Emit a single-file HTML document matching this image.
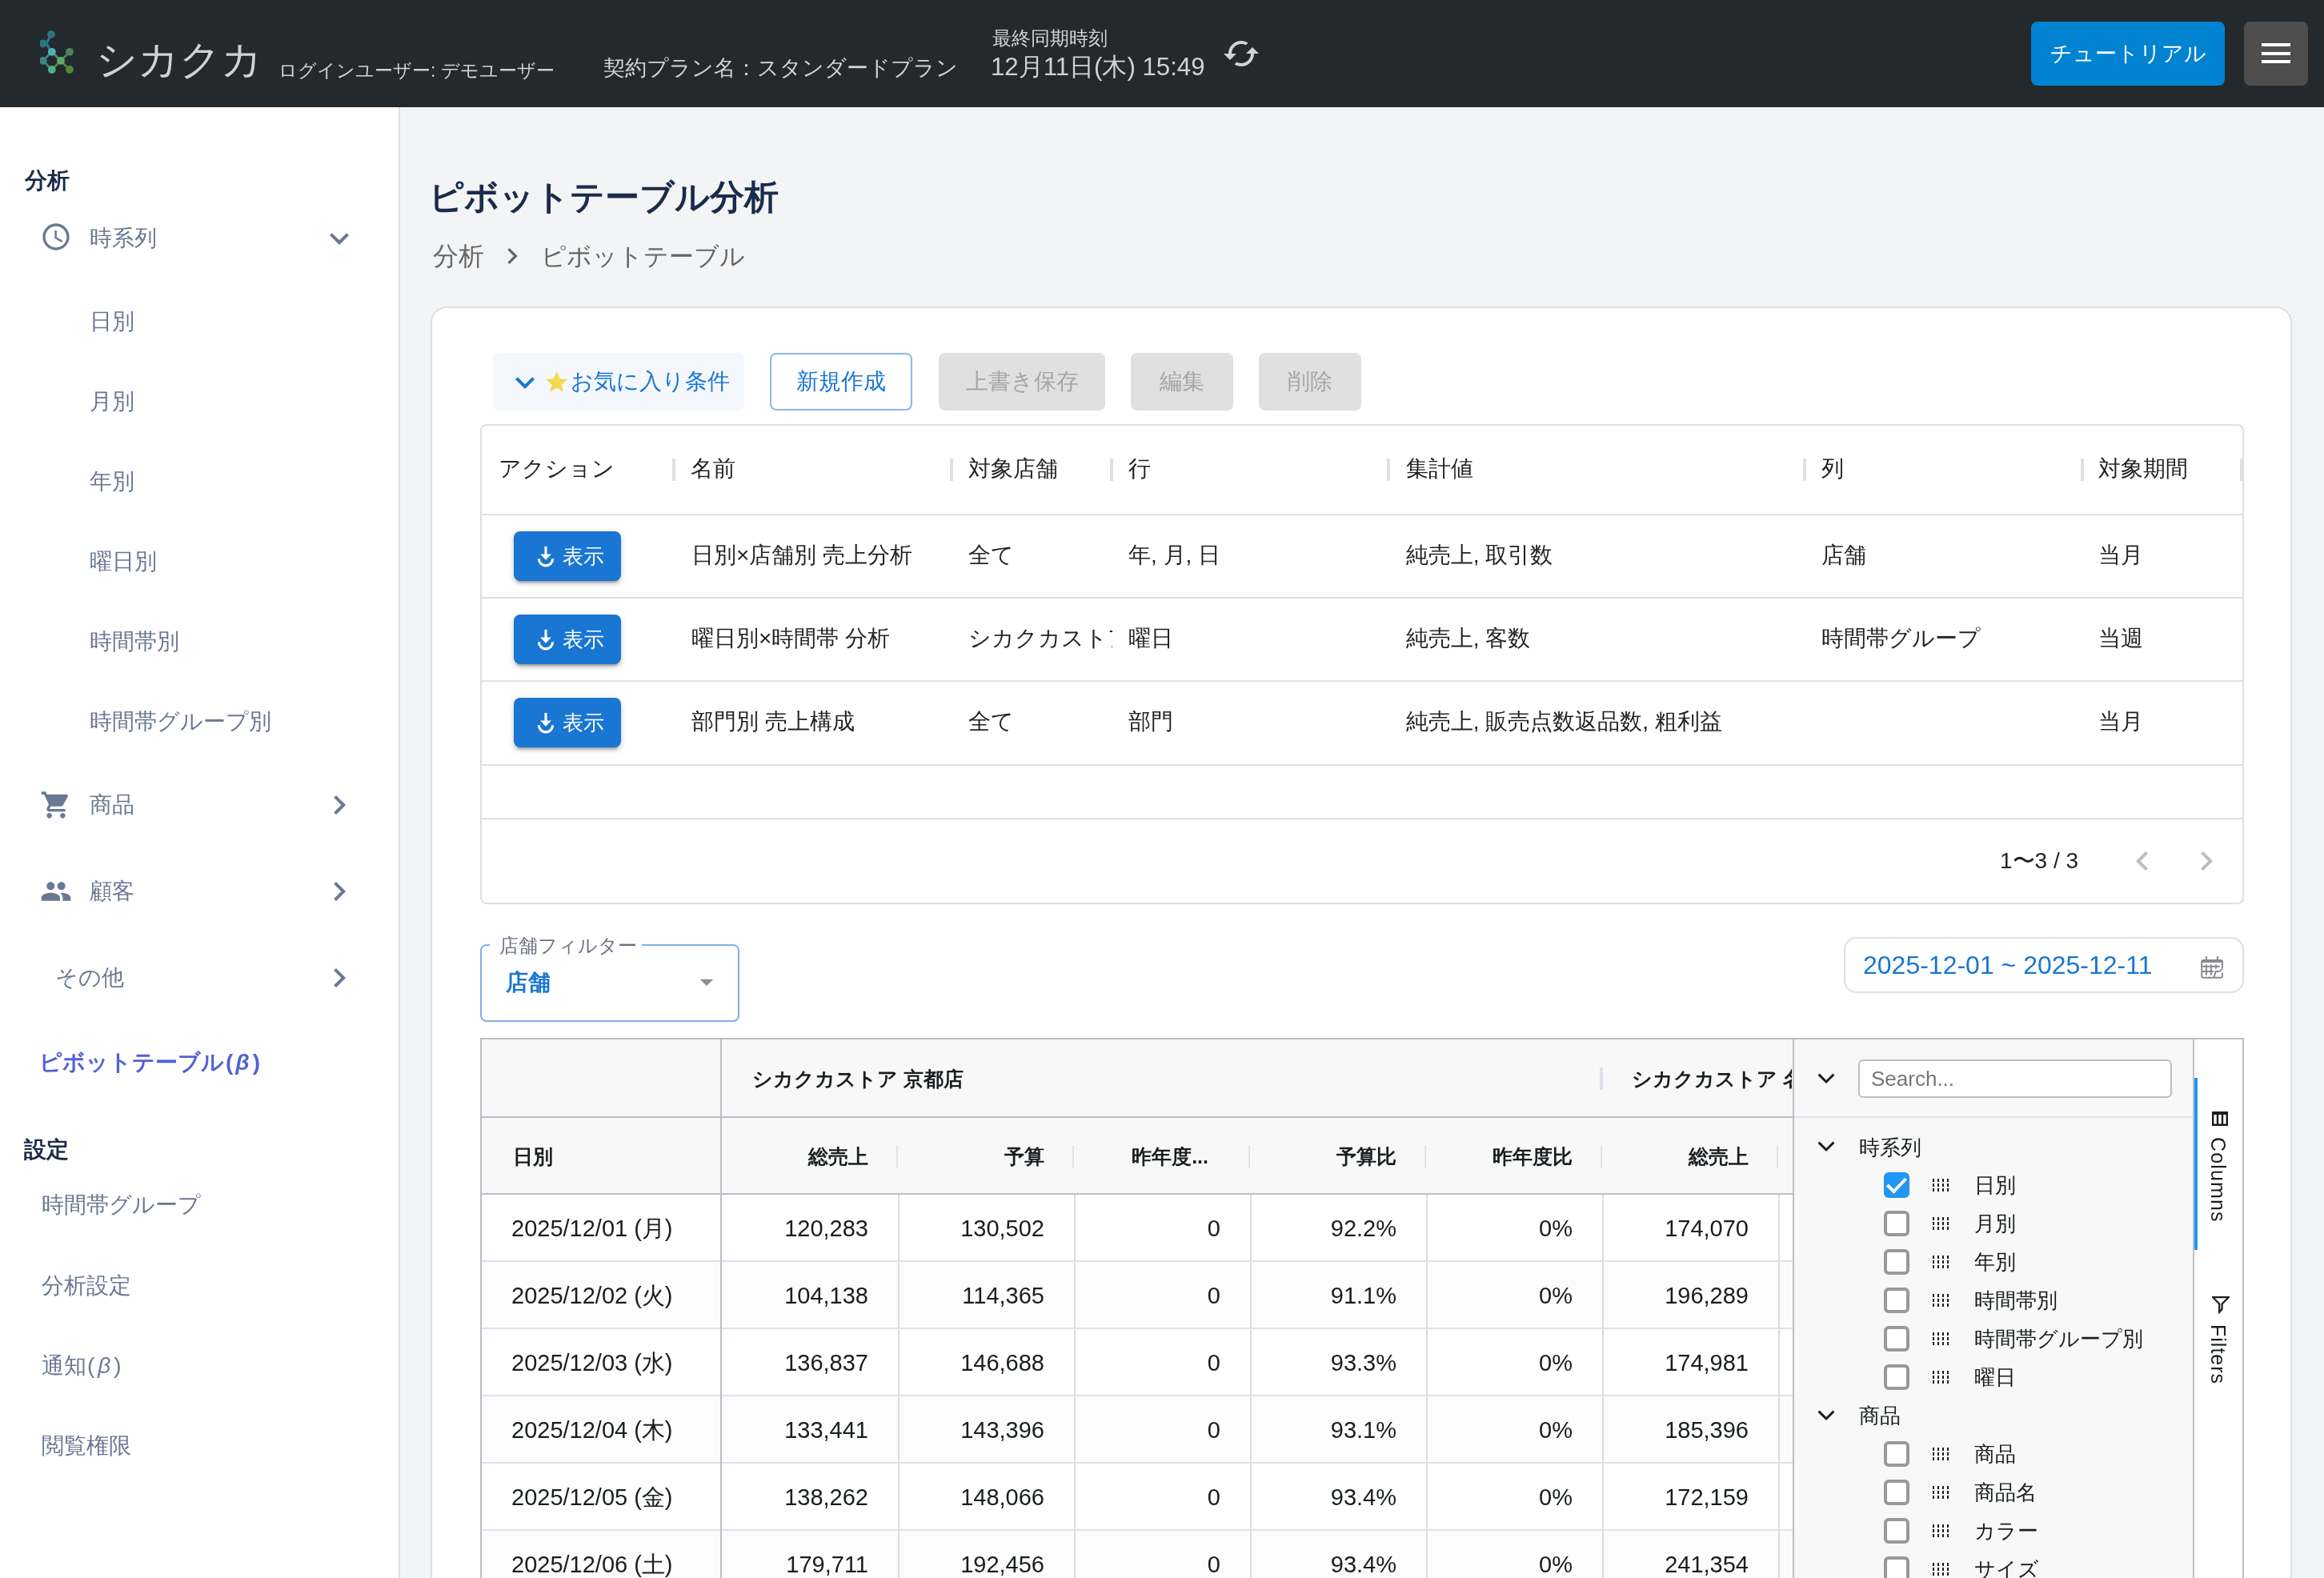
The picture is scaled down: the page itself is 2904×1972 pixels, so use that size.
<!DOCTYPE html>
<html><head><meta charset="utf-8">
<style>
html,body{margin:0;padding:0;background:#f3f4f6;overflow:hidden;}
body{width:2904px;height:1972px;}
#root{zoom:2;will-change:transform;position:relative;width:1452px;height:986px;overflow:hidden;background:#f3f4f6;font-family:"Liberation Sans",sans-serif;color:rgba(0,0,0,0.87);}
.a{position:absolute;white-space:nowrap;}
svg{display:block;}
/* header */
#hdr{position:absolute;left:0;top:0;width:1452px;height:67px;background:#24292d;}
/* sidebar */
#side{position:absolute;left:0;top:67px;width:249px;height:919px;background:#fff;border-right:1px solid #dedede;}
.sec{font-size:14px;font-weight:bold;color:#1b2b4b;line-height:20px;height:20px;}
.mi{font-size:14px;color:#6b7893;line-height:20px;height:20px;}

.t14{font-size:14px;line-height:20px;height:20px;}
.btn{position:absolute;top:220.5px;height:36px;border-radius:4px;font-size:14px;line-height:36px;text-align:center;}
.dis{background:#e0e0e0;color:#a6a6a6;}
.hl{position:absolute;height:1px;background:#e0e0e0;}
.sep{position:absolute;top:286.5px;width:2px;height:14px;background:#e0e0e0;}
.show{position:absolute;left:321px;width:67px;height:31px;background:#1976d2;border-radius:4px;box-shadow:0 3px 1px -2px rgba(0,0,0,0.2),0 2px 2px 0 rgba(0,0,0,0.14),0 1px 5px 0 rgba(0,0,0,0.12);}
.show span{position:absolute;left:30.5px;top:5.5px;font-size:13px;line-height:20px;color:#fff;}
.show svg{position:absolute;left:14px;top:8px;}
.cell{position:absolute;font-size:14px;line-height:20px;height:20px;white-space:nowrap;color:rgba(0,0,0,0.87);}
.ph{position:absolute;font-size:12.5px;line-height:18px;font-weight:bold;color:#181d1f;white-space:nowrap;}
.pc{position:absolute;font-size:14.5px;line-height:20px;color:#181d1f;white-space:nowrap;}
.pr{text-align:right;width:100px;}
.vl{position:absolute;width:1px;background:#dddddd;}
.cb{position:absolute;left:1177px;width:12px;height:12px;border:2px solid #999;border-radius:3px;background:#fff;}
.grip{position:absolute;left:1207.5px;width:11px;height:8px;}
.lbl{position:absolute;left:1233.5px;font-size:13px;line-height:18px;color:#181d1f;white-space:nowrap;}
@media (max-width:1500px){body{width:1452px;height:986px;}#root{zoom:1;}}
</style></head>
<body><div id="root">

<!-- HEADER -->
<div id="hdr">
  <svg class="a" style="left:25px;top:18px" width="24" height="30" viewBox="0 0 24 30">
    <path d="M6.97 3.43 C5.2 5.5 5.5 8.6 3.2 9.0 M3.2 9.0 C5.5 10 5.6 13 7.4 14.4" stroke="#2d7888" stroke-width="1.6" fill="none"/>
    <path d="M7.4 14.4 L1.88 19.95 L7.4 25.5" stroke="#3f8580" stroke-width="1.4" fill="none"/>
    <path d="M7.4 14.4 L12.95 19.95" stroke="#4a8a6a" stroke-width="1.4" fill="none"/>
    <path d="M7.4 25.5 L12.95 19.95 L18.5 25.5" stroke="#4f8a3f" stroke-width="1.4" fill="none"/>
    <path d="M12.95 19.95 L18.5 14.4" stroke="#4a8565" stroke-width="1.4" fill="none"/>
    <circle cx="6.97" cy="3.43" r="2.45" fill="#2d7283"/>
    <ellipse cx="1.9" cy="9.2" rx="2.6" ry="2.45" fill="#2c7384"/>
    <circle cx="7.4" cy="14.4" r="2.45" fill="#4db5b0"/>
    <circle cx="18.5" cy="14.4" r="2.45" fill="#4a8565"/>
    <circle cx="1.88" cy="19.95" r="2.45" fill="#3f8580"/>
    <circle cx="12.95" cy="19.95" r="2.45" fill="#5aab6d"/>
    <circle cx="7.4" cy="25.5" r="2.45" fill="#53ad8a"/>
    <circle cx="18.5" cy="25.5" r="2.45" fill="#4f873d"/>
  </svg>
  <div class="a" style="left:60px;top:22.5px;font-size:25.5px;line-height:30px;color:#d2d2d2;">シカクカ</div>
  <div class="a" style="left:174px;top:36px;font-size:11.5px;line-height:16px;color:#d2d2d2;">ログインユーザー: デモユーザー</div>
  <div class="a" style="left:377px;top:33.5px;font-size:13.6px;line-height:18px;color:#d2d2d2;">契約プラン名：スタンダードプラン</div>
  <div class="a" style="left:620px;top:16px;font-size:12px;line-height:16px;color:#d2d2d2;">最終同期時刻</div>
  <div class="a" style="left:619px;top:33px;font-size:15.6px;line-height:18px;color:#d2d2d2;">12月11日(木) 15:49</div>
  <svg class="a" style="left:763.5px;top:21.4px" width="24" height="24" viewBox="0 0 24 24"><path fill="#d2d2d2" d="M19 8l-4 4h3c0 3.31-2.69 6-6 6-1.01 0-1.97-.25-2.8-.7l-1.46 1.46C8.97 19.54 10.43 20 12 20c4.42 0 8-3.58 8-8h3l-4-4zM6 12c0-3.31 2.69-6 6-6 1.01 0 1.97.25 2.8.7l1.46-1.46C15.03 4.46 13.57 4 12 4c-4.42 0-8 3.58-8 8H1l4 4 4-4H6z"/></svg>
  <div class="a" style="left:1269px;top:13.5px;width:121px;height:40px;background:#0283d1;border-radius:4px;color:#fff;font-size:13.4px;line-height:40px;text-align:center;">チュートリアル</div>
  <div class="a" style="left:1402px;top:13.5px;width:40px;height:40px;background:#4e4e4e;border-radius:4px;">
    <div class="a" style="left:11px;top:13.5px;width:18px;height:2px;background:#fff"></div>
    <div class="a" style="left:11px;top:19px;width:18px;height:2px;background:#fff"></div>
    <div class="a" style="left:11px;top:24px;width:18px;height:2px;background:#fff"></div>
  </div>
</div>

<!-- SIDEBAR -->
<div id="side">
  <div class="a sec" style="left:15.5px;top:35.75px;">分析</div>
  <svg class="a" style="left:25px;top:71px" width="20" height="20" viewBox="0 0 24 24"><path fill="#6b7893" d="M11.99 2C6.47 2 2 6.48 2 12s4.47 10 9.99 10C17.52 22 22 17.52 22 12S17.52 2 11.99 2zM12 20c-4.42 0-8-3.58-8-8s3.58-8 8-8 8 3.58 8 8-3.58 8-8 8zm.5-13H11v6l5.25 3.15.75-1.23-4.5-2.67z"/></svg>
  <div class="a mi" style="left:56px;top:72px;">時系列</div>
  <svg class="a" style="left:200px;top:70px" width="24" height="24" viewBox="0 0 24 24"><path fill="#6b7893" d="M16.59 8.59 12 13.17 7.41 8.59 6 10l6 6 6-6z"/></svg>
  <div class="a mi" style="left:56px;top:124px;">日別</div>
  <div class="a mi" style="left:56px;top:174px;">月別</div>
  <div class="a mi" style="left:56px;top:224px;">年別</div>
  <div class="a mi" style="left:56px;top:274px;">曜日別</div>
  <div class="a mi" style="left:56px;top:324px;">時間帯別</div>
  <div class="a mi" style="left:56px;top:374px;">時間帯グループ別</div>
  <svg class="a" style="left:25px;top:426px" width="20" height="20" viewBox="0 0 24 24"><path fill="#6b7893" d="M7 18c-1.1 0-1.99.9-1.99 2S5.9 22 7 22s2-.9 2-2-.9-2-2-2zM1 2v2h2l3.6 7.59-1.35 2.45c-.16.28-.25.61-.25.96 0 1.1.9 2 2 2h12v-2H7.42c-.14 0-.25-.11-.25-.25l.03-.12.9-1.63h7.45c.75 0 1.41-.41 1.75-1.03l3.58-6.47c.08-.15.12-.31.12-.48 0-.55-.45-1-1-1H5.21l-.94-2H1zm16 16c-1.1 0-1.99.9-1.99 2s.89 2 1.99 2 2-.9 2-2-.9-2-2-2z"/></svg>
  <div class="a mi" style="left:56px;top:426px;">商品</div>
  <svg class="a" style="left:200px;top:424px" width="24" height="24" viewBox="0 0 24 24"><path fill="#6b7893" d="M10 6 8.59 7.41 13.17 12l-4.58 4.59L10 18l6-6z"/></svg>
  <svg class="a" style="left:25.2px;top:479.8px" width="20" height="20" viewBox="0 0 24 24"><path fill="#6b7893" d="M16 11c1.66 0 2.99-1.34 2.99-3S17.66 5 16 5c-1.66 0-3 1.34-3 3s1.34 3 3 3zm-8 0c1.66 0 2.99-1.34 2.99-3S9.66 5 8 5C6.34 5 5 6.34 5 8s1.34 3 3 3zm0 2c-2.33 0-7 1.17-7 3.5V19h14v-2.5c0-2.33-4.67-3.5-7-3.5zm8 0c-.29 0-.62.02-.97.05 1.16.84 1.97 1.97 1.97 3.45V19h6v-2.5c0-2.33-4.67-3.5-7-3.5z"/></svg>
  <div class="a mi" style="left:56px;top:480px;">顧客</div>
  <svg class="a" style="left:200px;top:478px" width="24" height="24" viewBox="0 0 24 24"><path fill="#6b7893" d="M10 6 8.59 7.41 13.17 12l-4.58 4.59L10 18l6-6z"/></svg>
  <div class="a mi" style="left:34.5px;top:534px;">その他</div>
  <svg class="a" style="left:200px;top:532px" width="24" height="24" viewBox="0 0 24 24"><path fill="#6b7893" d="M10 6 8.59 7.41 13.17 12l-4.58 4.59L10 18l6-6z"/></svg>
  <div class="a mi" style="left:24.5px;top:587px;color:#5262d4;font-weight:bold;">ピボットテーブル<span style="margin-left:1px">(</span><span style="font-style:italic;margin:0 2px 0 1.5px">β</span><span>)</span></div>
  <div class="a sec" style="left:15px;top:641.5px;">設定</div>
  <div class="a mi" style="left:26px;top:676px;">時間帯グループ</div>
  <div class="a mi" style="left:26px;top:726.5px;">分析設定</div>
  <div class="a mi" style="left:26px;top:776.5px;">通知<span style="margin-left:0.5px">(</span><span style="font-style:italic;margin:0 2px 0 2px">β</span><span>)</span></div>
  <div class="a mi" style="left:26px;top:826.5px;">閲覧権限</div>
</div>

<!-- MAIN -->
<div class="a" style="left:268px;top:108px;font-size:21.7px;line-height:30px;font-weight:bold;color:#1a2b4c;">ピボットテーブル分析</div>
<div class="a" style="left:270.5px;top:149px;font-size:16px;line-height:22px;color:#666;">分析</div>
<svg class="a" style="left:309.8px;top:150px" width="20" height="20" viewBox="0 0 24 24"><path fill="#666" d="M10 6 8.59 7.41 13.17 12l-4.58 4.59L10 18l6-6z"/></svg>
<div class="a" style="left:338px;top:149.5px;font-size:15.4px;line-height:22px;color:#666;">ピボットテーブル</div>

<div class="a" style="left:269px;top:191.5px;width:1161px;height:900px;background:#fff;border:1px solid #dcdee2;border-radius:10px;"></div>

<div class="btn" style="left:308px;width:157px;background:#f4f8fc;"></div>
<svg class="a" style="left:316.1px;top:227px" width="24" height="24" viewBox="0 0 24 24"><path fill="#1976d2" d="M16.59 8.59 12 13.17 7.41 8.59 6 10l6 6 6-6z"/></svg>
<svg class="a" style="left:340.5px;top:232px" width="14.6" height="14" viewBox="0 0 24 23"><path fill="#f2d94e" d="M12 0l3.1 7.6 8.1.6-6.2 5.3 2 7.9L12 17.1l-7 4.3 2-7.9L.8 8.2l8.1-.6z"/></svg>
<div class="a" style="left:356.5px;top:228.5px;font-size:14px;line-height:20px;color:#1976d2;">お気に入り条件</div>
<div class="btn" style="left:481px;width:87px;border:1px solid #8ab9e9;color:#1976d2;height:34px;line-height:34px;">新規作成</div>
<div class="btn dis" style="left:586.5px;width:104px;">上書き保存</div>
<div class="btn dis" style="left:706.5px;width:64px;">編集</div>
<div class="btn dis" style="left:786.5px;width:64px;">削除</div>

<!-- saved conditions grid -->
<div class="a" style="left:300px;top:265px;width:1100px;height:298px;border:1px solid #e0e0e0;border-radius:4px;background:#fff;"></div>
<div class="hl" style="left:301px;top:321px;width:1100px;"></div>
<div class="hl" style="left:301px;top:373px;width:1100px;"></div>
<div class="hl" style="left:301px;top:425px;width:1100px;"></div>
<div class="hl" style="left:301px;top:477.5px;width:1100px;"></div>
<div class="hl" style="left:301px;top:511px;width:1100px;"></div>
<div class="sep" style="left:420px"></div>
<div class="sep" style="left:593.5px"></div>
<div class="sep" style="left:693.5px"></div>
<div class="sep" style="left:866.5px"></div>
<div class="sep" style="left:1126.5px"></div>
<div class="sep" style="left:1300px"></div>
<div class="sep" style="left:1399.5px"></div>
<div class="cell" style="left:311.5px;top:283px;">アクション</div>
<div class="cell" style="left:431.5px;top:283px;">名前</div>
<div class="cell" style="left:605px;top:283px;">対象店舗</div>
<div class="cell" style="left:705px;top:283px;">行</div>
<div class="cell" style="left:878.4px;top:283px;">集計値</div>
<div class="cell" style="left:1138px;top:283px;">列</div>
<div class="cell" style="left:1311px;top:283px;">対象期間</div>

<div class="show" style="top:332px;"><svg width="12" height="15" viewBox="0 0 12 15"><path d="M6 1.45v5.5" stroke="#fff" stroke-width="1.55"/><path d="M2.55 6.25h6.9L6 9.9z" fill="#fff"/><path d="M1.67 9.1a4.33 4.33 0 0 0 8.66 0" stroke="#fff" stroke-width="1.55" fill="none"/></svg><span>表示</span></div>
<div class="show" style="top:384px;"><svg width="12" height="15" viewBox="0 0 12 15"><path d="M6 1.45v5.5" stroke="#fff" stroke-width="1.55"/><path d="M2.55 6.25h6.9L6 9.9z" fill="#fff"/><path d="M1.67 9.1a4.33 4.33 0 0 0 8.66 0" stroke="#fff" stroke-width="1.55" fill="none"/></svg><span>表示</span></div>
<div class="show" style="top:436px;"><svg width="12" height="15" viewBox="0 0 12 15"><path d="M6 1.45v5.5" stroke="#fff" stroke-width="1.55"/><path d="M2.55 6.25h6.9L6 9.9z" fill="#fff"/><path d="M1.67 9.1a4.33 4.33 0 0 0 8.66 0" stroke="#fff" stroke-width="1.55" fill="none"/></svg><span>表示</span></div>

<div class="cell" style="left:432px;top:337px;">日別×店舗別 売上分析</div>
<div class="cell" style="left:605px;top:337px;">全て</div>
<div class="cell" style="left:705px;top:337px;">年, 月, 日</div>
<div class="cell" style="left:878.4px;top:337px;">純売上, 取引数</div>
<div class="cell" style="left:1138px;top:337px;">店舗</div>
<div class="cell" style="left:1311px;top:337px;">当月</div>

<div class="cell" style="left:432px;top:389px;">曜日別×時間帯 分析</div>
<div class="cell" style="left:605px;top:389px;width:90px;overflow:hidden;">シカクカストア</div>
<div class="cell" style="left:705px;top:389px;">曜日</div>
<div class="cell" style="left:878.4px;top:389px;">純売上, 客数</div>
<div class="cell" style="left:1138px;top:389px;">時間帯グループ</div>
<div class="cell" style="left:1311px;top:389px;">当週</div>

<div class="cell" style="left:432px;top:441px;">部門別 売上構成</div>
<div class="cell" style="left:605px;top:441px;">全て</div>
<div class="cell" style="left:705px;top:441px;">部門</div>
<div class="cell" style="left:878.4px;top:441px;">純売上, 販売点数返品数, 粗利益</div>
<div class="cell" style="left:1311px;top:441px;">当月</div>

<div class="cell" style="left:1249.5px;top:528px;">1〜3 / 3</div>
<svg class="a" style="left:1326.7px;top:525.8px" width="24" height="24" viewBox="0 0 24 24"><path fill="#bdbdbd" d="M15.41 16.59 10.83 12l4.58-4.59L14 6l-6 6 6 6 1.41-1.41z"/></svg>
<svg class="a" style="left:1366.4px;top:525.8px" width="24" height="24" viewBox="0 0 24 24"><path fill="#bdbdbd" d="M8.59 16.59 13.17 12 8.59 7.41 10 6l6 6-6 6-1.41-1.41z"/></svg>

<!-- store filter -->
<div class="a" style="left:300px;top:590px;width:160px;height:46.5px;border:1px solid #7eb0e9;border-radius:4px;"></div>
<div class="a" style="left:306px;top:588px;width:95px;height:4px;background:#fff;"></div>
<div class="a" style="left:312px;top:583px;font-size:12px;line-height:16px;color:#6b7280;">店舗フィルター</div>
<div class="a" style="left:316px;top:604px;font-size:14px;line-height:20px;font-weight:bold;color:#1976d2;">店舗</div>
<svg class="a" style="left:431.6px;top:603.4px" width="20" height="20" viewBox="0 0 24 24"><path fill="#8e8e8e" d="M7 10l5 5 5-5z"/></svg>

<!-- date picker -->
<div class="a" style="left:1152px;top:585.5px;width:248px;height:33px;border:1px solid #dcdfe6;border-radius:8px;background:#fff;"></div>
<div class="a" style="left:1164px;top:592px;font-size:16px;line-height:22px;color:#1976d2;">2025-12-01 ~ 2025-12-11</div>
<svg class="a" style="left:1370px;top:592.5px" width="25" height="22.5" viewBox="0 0 50 45"><g fill="none" stroke="#88888e" stroke-width="1.9"><path d="M37 30.4V34.7Q37 36.7 35 36.7H13.2Q11.2 36.7 11.2 34.7V17Q11.2 15 13.2 15H35Q37 15 37 17V23.5C37 27 34 28.95 30.8 28.95H28.5C28 32 27.5 35 26 36.7"/><path d="M16.95 10V15M30.95 10V15M11.8 22.8H33.8M11.8 28.95H25.8M16.95 20.25V33.8M22.95 20.25V33.8M28.95 20.25V25.7"/></g><rect x="11.2" y="15" width="25.8" height="2.9" fill="#88888e"/></svg>

<!-- PIVOT -->
<div class="a" style="left:0;top:0.5px;width:1452px;height:986px;">
<div class="a" style="left:300px;top:648px;width:1100px;height:400px;border:1px solid #babfc7;background:#fff;"></div>
<div class="a" style="left:301px;top:649px;width:820px;height:97px;background:#f8f8f8;"></div>
<div class="a" style="left:301px;top:697px;width:820px;height:1px;background:#babfc7;"></div>
<div class="a" style="left:301px;top:745px;width:820px;height:1px;background:#babfc7;"></div>
<div class="a" style="left:301px;top:746px;width:820px;height:41px;background:#fff;"></div>
<div class="a" style="left:301px;top:787px;width:820px;height:1px;background:#dde2eb;"></div>
<div class="pc" style="left:319.5px;top:757px;">2025/12/01 (月)</div>
<div class="pc pr" style="left:442.5px;top:757px;">120,283</div>
<div class="pc pr" style="left:552.5px;top:757px;">130,502</div>
<div class="pc pr" style="left:662.5px;top:757px;">0</div>
<div class="pc pr" style="left:772.5px;top:757px;">92.2%</div>
<div class="pc pr" style="left:882.5px;top:757px;">0%</div>
<div class="pc pr" style="left:992.5px;top:757px;">174,070</div>
<div class="a" style="left:301px;top:788px;width:820px;height:41px;background:#fcfcfc;"></div>
<div class="a" style="left:301px;top:829px;width:820px;height:1px;background:#dde2eb;"></div>
<div class="pc" style="left:319.5px;top:799px;">2025/12/02 (火)</div>
<div class="pc pr" style="left:442.5px;top:799px;">104,138</div>
<div class="pc pr" style="left:552.5px;top:799px;">114,365</div>
<div class="pc pr" style="left:662.5px;top:799px;">0</div>
<div class="pc pr" style="left:772.5px;top:799px;">91.1%</div>
<div class="pc pr" style="left:882.5px;top:799px;">0%</div>
<div class="pc pr" style="left:992.5px;top:799px;">196,289</div>
<div class="a" style="left:301px;top:830px;width:820px;height:41px;background:#fff;"></div>
<div class="a" style="left:301px;top:871px;width:820px;height:1px;background:#dde2eb;"></div>
<div class="pc" style="left:319.5px;top:841px;">2025/12/03 (水)</div>
<div class="pc pr" style="left:442.5px;top:841px;">136,837</div>
<div class="pc pr" style="left:552.5px;top:841px;">146,688</div>
<div class="pc pr" style="left:662.5px;top:841px;">0</div>
<div class="pc pr" style="left:772.5px;top:841px;">93.3%</div>
<div class="pc pr" style="left:882.5px;top:841px;">0%</div>
<div class="pc pr" style="left:992.5px;top:841px;">174,981</div>
<div class="a" style="left:301px;top:872px;width:820px;height:41px;background:#fcfcfc;"></div>
<div class="a" style="left:301px;top:913px;width:820px;height:1px;background:#dde2eb;"></div>
<div class="pc" style="left:319.5px;top:883px;">2025/12/04 (木)</div>
<div class="pc pr" style="left:442.5px;top:883px;">133,441</div>
<div class="pc pr" style="left:552.5px;top:883px;">143,396</div>
<div class="pc pr" style="left:662.5px;top:883px;">0</div>
<div class="pc pr" style="left:772.5px;top:883px;">93.1%</div>
<div class="pc pr" style="left:882.5px;top:883px;">0%</div>
<div class="pc pr" style="left:992.5px;top:883px;">185,396</div>
<div class="a" style="left:301px;top:914px;width:820px;height:41px;background:#fff;"></div>
<div class="a" style="left:301px;top:955px;width:820px;height:1px;background:#dde2eb;"></div>
<div class="pc" style="left:319.5px;top:925px;">2025/12/05 (金)</div>
<div class="pc pr" style="left:442.5px;top:925px;">138,262</div>
<div class="pc pr" style="left:552.5px;top:925px;">148,066</div>
<div class="pc pr" style="left:662.5px;top:925px;">0</div>
<div class="pc pr" style="left:772.5px;top:925px;">93.4%</div>
<div class="pc pr" style="left:882.5px;top:925px;">0%</div>
<div class="pc pr" style="left:992.5px;top:925px;">172,159</div>
<div class="a" style="left:301px;top:956px;width:820px;height:41px;background:#fcfcfc;"></div>
<div class="a" style="left:301px;top:997px;width:820px;height:1px;background:#dde2eb;"></div>
<div class="pc" style="left:319.5px;top:967px;">2025/12/06 (土)</div>
<div class="pc pr" style="left:442.5px;top:967px;">179,711</div>
<div class="pc pr" style="left:552.5px;top:967px;">192,456</div>
<div class="pc pr" style="left:662.5px;top:967px;">0</div>
<div class="pc pr" style="left:772.5px;top:967px;">93.4%</div>
<div class="pc pr" style="left:882.5px;top:967px;">0%</div>
<div class="pc pr" style="left:992.5px;top:967px;">241,354</div>
<div class="vl" style="left:561px;top:746px;height:242px;"></div>
<div class="vl" style="left:671px;top:746px;height:242px;"></div>
<div class="vl" style="left:781px;top:746px;height:242px;"></div>
<div class="vl" style="left:891px;top:746px;height:242px;"></div>
<div class="vl" style="left:1001px;top:746px;height:242px;"></div>
<div class="vl" style="left:1111px;top:746px;height:242px;"></div>
<div class="a" style="left:450px;top:649px;width:1px;height:340px;background:#babfc7;"></div>
<div class="ph" style="left:470px;top:664.5px;">シカクカストア 京都店</div>
<div class="a" style="left:999.5px;top:666.5px;width:2px;height:14px;background:#dde2eb;"></div>
<div class="ph" style="left:1019.5px;top:664.5px;width:100px;overflow:hidden;">シカクカストア 名古屋店</div>
<div class="ph" style="left:320.3px;top:713px;">日別</div>
<div class="ph" style="left:442.5px;top:713px;width:100px;text-align:right;">総売上</div>
<div class="a" style="left:560px;top:715px;width:1px;height:14px;background:#dde2eb;"></div>
<div class="ph" style="left:552.5px;top:713px;width:100px;text-align:right;">予算</div>
<div class="a" style="left:670px;top:715px;width:1px;height:14px;background:#dde2eb;"></div>
<div class="ph" style="left:655px;top:713px;width:100px;text-align:right;">昨年度...</div>
<div class="a" style="left:780px;top:715px;width:1px;height:14px;background:#dde2eb;"></div>
<div class="ph" style="left:772.5px;top:713px;width:100px;text-align:right;">予算比</div>
<div class="a" style="left:890px;top:715px;width:1px;height:14px;background:#dde2eb;"></div>
<div class="ph" style="left:882.5px;top:713px;width:100px;text-align:right;">昨年度比</div>
<div class="a" style="left:1000px;top:715px;width:1px;height:14px;background:#dde2eb;"></div>
<div class="ph" style="left:992.5px;top:713px;width:100px;text-align:right;">総売上</div>
<div class="a" style="left:1110px;top:715px;width:1px;height:14px;background:#dde2eb;"></div>
<div class="a" style="left:1120px;top:649px;width:250px;height:340px;background:#f8f8f8;border-left:1px solid #babfc7;"></div>
<div class="a" style="left:1121px;top:697px;width:249px;height:1px;background:#dde2eb;"></div>
<svg class="a" style="left:1135.5px;top:670px" width="11" height="7" viewBox="0 0 11 7"><path d="M0.8 0.8 5.5 5.5 10.2 0.8" stroke="#181d1f" stroke-width="1.5" fill="none"/></svg>
<div class="a" style="left:1161px;top:661.5px;width:194px;height:22px;border:1px solid #babfc7;border-radius:3px;background:#fff;"></div>
<div class="a" style="left:1169px;top:664.5px;font-size:13px;line-height:18px;color:#777;">Search...</div>
<svg class="a" style="left:1135.5px;top:712.5px" width="11" height="7" viewBox="0 0 11 7"><path d="M0.8 0.8 5.5 5.5 10.2 0.8" stroke="#181d1f" stroke-width="1.5" fill="none"/></svg>
<div class="lbl" style="left:1161.4px;top:707.5px;">時系列</div>
<div class="a" style="left:1177px;top:732px;width:16px;height:16px;background:#2196f3;border-radius:3px;"><svg width="16" height="16" viewBox="0 0 16 16"><path d="M2.2 8 6.25 12 13.8 4" stroke="#fff" stroke-width="2" fill="none"/></svg></div><div class="grip" style="top:736px;"><svg width="11" height="8" viewBox="0 0 11 8" fill="#181d1f"><rect x="0" y="0" width="1" height="2"/><rect x="3" y="0" width="1" height="2"/><rect x="6" y="0" width="1" height="2"/><rect x="9" y="0" width="1" height="2"/><rect x="0" y="3" width="1" height="2"/><rect x="3" y="3" width="1" height="2"/><rect x="6" y="3" width="1" height="2"/><rect x="9" y="3" width="1" height="2"/><rect x="0" y="6" width="1" height="2"/><rect x="3" y="6" width="1" height="2"/><rect x="6" y="6" width="1" height="2"/><rect x="9" y="6" width="1" height="2"/></svg></div><div class="lbl" style="top:731px;">日別</div>
<div class="cb" style="top:756px;"></div><div class="grip" style="top:760px;"><svg width="11" height="8" viewBox="0 0 11 8" fill="#181d1f"><rect x="0" y="0" width="1" height="2"/><rect x="3" y="0" width="1" height="2"/><rect x="6" y="0" width="1" height="2"/><rect x="9" y="0" width="1" height="2"/><rect x="0" y="3" width="1" height="2"/><rect x="3" y="3" width="1" height="2"/><rect x="6" y="3" width="1" height="2"/><rect x="9" y="3" width="1" height="2"/><rect x="0" y="6" width="1" height="2"/><rect x="3" y="6" width="1" height="2"/><rect x="6" y="6" width="1" height="2"/><rect x="9" y="6" width="1" height="2"/></svg></div><div class="lbl" style="top:755px;">月別</div>
<div class="cb" style="top:780px;"></div><div class="grip" style="top:784px;"><svg width="11" height="8" viewBox="0 0 11 8" fill="#181d1f"><rect x="0" y="0" width="1" height="2"/><rect x="3" y="0" width="1" height="2"/><rect x="6" y="0" width="1" height="2"/><rect x="9" y="0" width="1" height="2"/><rect x="0" y="3" width="1" height="2"/><rect x="3" y="3" width="1" height="2"/><rect x="6" y="3" width="1" height="2"/><rect x="9" y="3" width="1" height="2"/><rect x="0" y="6" width="1" height="2"/><rect x="3" y="6" width="1" height="2"/><rect x="6" y="6" width="1" height="2"/><rect x="9" y="6" width="1" height="2"/></svg></div><div class="lbl" style="top:779px;">年別</div>
<div class="cb" style="top:804px;"></div><div class="grip" style="top:808px;"><svg width="11" height="8" viewBox="0 0 11 8" fill="#181d1f"><rect x="0" y="0" width="1" height="2"/><rect x="3" y="0" width="1" height="2"/><rect x="6" y="0" width="1" height="2"/><rect x="9" y="0" width="1" height="2"/><rect x="0" y="3" width="1" height="2"/><rect x="3" y="3" width="1" height="2"/><rect x="6" y="3" width="1" height="2"/><rect x="9" y="3" width="1" height="2"/><rect x="0" y="6" width="1" height="2"/><rect x="3" y="6" width="1" height="2"/><rect x="6" y="6" width="1" height="2"/><rect x="9" y="6" width="1" height="2"/></svg></div><div class="lbl" style="top:803px;">時間帯別</div>
<div class="cb" style="top:828px;"></div><div class="grip" style="top:832px;"><svg width="11" height="8" viewBox="0 0 11 8" fill="#181d1f"><rect x="0" y="0" width="1" height="2"/><rect x="3" y="0" width="1" height="2"/><rect x="6" y="0" width="1" height="2"/><rect x="9" y="0" width="1" height="2"/><rect x="0" y="3" width="1" height="2"/><rect x="3" y="3" width="1" height="2"/><rect x="6" y="3" width="1" height="2"/><rect x="9" y="3" width="1" height="2"/><rect x="0" y="6" width="1" height="2"/><rect x="3" y="6" width="1" height="2"/><rect x="6" y="6" width="1" height="2"/><rect x="9" y="6" width="1" height="2"/></svg></div><div class="lbl" style="top:827px;">時間帯グループ別</div>
<div class="cb" style="top:852px;"></div><div class="grip" style="top:856px;"><svg width="11" height="8" viewBox="0 0 11 8" fill="#181d1f"><rect x="0" y="0" width="1" height="2"/><rect x="3" y="0" width="1" height="2"/><rect x="6" y="0" width="1" height="2"/><rect x="9" y="0" width="1" height="2"/><rect x="0" y="3" width="1" height="2"/><rect x="3" y="3" width="1" height="2"/><rect x="6" y="3" width="1" height="2"/><rect x="9" y="3" width="1" height="2"/><rect x="0" y="6" width="1" height="2"/><rect x="3" y="6" width="1" height="2"/><rect x="6" y="6" width="1" height="2"/><rect x="9" y="6" width="1" height="2"/></svg></div><div class="lbl" style="top:851px;">曜日</div>
<svg class="a" style="left:1135.5px;top:880.5px" width="11" height="7" viewBox="0 0 11 7"><path d="M0.8 0.8 5.5 5.5 10.2 0.8" stroke="#181d1f" stroke-width="1.5" fill="none"/></svg>
<div class="lbl" style="left:1161.4px;top:875px;">商品</div>
<div class="cb" style="top:900px;"></div><div class="grip" style="top:904px;"><svg width="11" height="8" viewBox="0 0 11 8" fill="#181d1f"><rect x="0" y="0" width="1" height="2"/><rect x="3" y="0" width="1" height="2"/><rect x="6" y="0" width="1" height="2"/><rect x="9" y="0" width="1" height="2"/><rect x="0" y="3" width="1" height="2"/><rect x="3" y="3" width="1" height="2"/><rect x="6" y="3" width="1" height="2"/><rect x="9" y="3" width="1" height="2"/><rect x="0" y="6" width="1" height="2"/><rect x="3" y="6" width="1" height="2"/><rect x="6" y="6" width="1" height="2"/><rect x="9" y="6" width="1" height="2"/></svg></div><div class="lbl" style="top:899px;">商品</div>
<div class="cb" style="top:924px;"></div><div class="grip" style="top:928px;"><svg width="11" height="8" viewBox="0 0 11 8" fill="#181d1f"><rect x="0" y="0" width="1" height="2"/><rect x="3" y="0" width="1" height="2"/><rect x="6" y="0" width="1" height="2"/><rect x="9" y="0" width="1" height="2"/><rect x="0" y="3" width="1" height="2"/><rect x="3" y="3" width="1" height="2"/><rect x="6" y="3" width="1" height="2"/><rect x="9" y="3" width="1" height="2"/><rect x="0" y="6" width="1" height="2"/><rect x="3" y="6" width="1" height="2"/><rect x="6" y="6" width="1" height="2"/><rect x="9" y="6" width="1" height="2"/></svg></div><div class="lbl" style="top:923px;">商品名</div>
<div class="cb" style="top:948px;"></div><div class="grip" style="top:952px;"><svg width="11" height="8" viewBox="0 0 11 8" fill="#181d1f"><rect x="0" y="0" width="1" height="2"/><rect x="3" y="0" width="1" height="2"/><rect x="6" y="0" width="1" height="2"/><rect x="9" y="0" width="1" height="2"/><rect x="0" y="3" width="1" height="2"/><rect x="3" y="3" width="1" height="2"/><rect x="6" y="3" width="1" height="2"/><rect x="9" y="3" width="1" height="2"/><rect x="0" y="6" width="1" height="2"/><rect x="3" y="6" width="1" height="2"/><rect x="6" y="6" width="1" height="2"/><rect x="9" y="6" width="1" height="2"/></svg></div><div class="lbl" style="top:947px;">カラー</div>
<div class="cb" style="top:972px;"></div><div class="grip" style="top:976px;"><svg width="11" height="8" viewBox="0 0 11 8" fill="#181d1f"><rect x="0" y="0" width="1" height="2"/><rect x="3" y="0" width="1" height="2"/><rect x="6" y="0" width="1" height="2"/><rect x="9" y="0" width="1" height="2"/><rect x="0" y="3" width="1" height="2"/><rect x="3" y="3" width="1" height="2"/><rect x="6" y="3" width="1" height="2"/><rect x="9" y="3" width="1" height="2"/><rect x="0" y="6" width="1" height="2"/><rect x="3" y="6" width="1" height="2"/><rect x="6" y="6" width="1" height="2"/><rect x="9" y="6" width="1" height="2"/></svg></div><div class="lbl" style="top:971px;">サイズ</div>
<div class="a" style="left:1370px;top:649px;width:30px;height:340px;background:#fff;border-left:1px solid #babfc7;"></div>
<div class="a" style="left:1371px;top:673px;width:2px;height:107.5px;background:#2196f3;"></div>
<svg class="a" style="left:1382px;top:694px" width="10" height="9" viewBox="0 0 10 9"><path d="M0.6 0.6h8.8v7.8H0.6z M3.5 0.6v7.8 M6.5 0.6v7.8" stroke="#181d1f" stroke-width="1.2" fill="none"/><rect x="0" y="0" width="10" height="2" fill="#181d1f"/></svg>
<div class="a" style="left:1377.1px;top:710px;width:18px;height:58px;"><div style="position:absolute;left:0;top:0;transform-origin:0 0;transform:translate(18px,0) rotate(90deg);font-size:12.5px;letter-spacing:0.58px;line-height:18px;color:#181d1f;white-space:nowrap;">Columns</div></div>
<svg class="a" style="left:1382px;top:809.5px" width="11" height="11" viewBox="0 0 11 11"><path d="M0.6 0.6 H10.4 L6.3 4.7 V7.9 L4.6 9.9 V4.7 Z" stroke="#181d1f" stroke-width="1.1" fill="none" stroke-linejoin="miter"/></svg>
<div class="a" style="left:1377.1px;top:827px;width:18px;height:42px;"><div style="position:absolute;left:0;top:0;transform-origin:0 0;transform:translate(18px,0) rotate(90deg);font-size:12.5px;letter-spacing:0.5px;line-height:18px;color:#181d1f;white-space:nowrap;">Filters</div></div>
</div>
</div></body></html>
